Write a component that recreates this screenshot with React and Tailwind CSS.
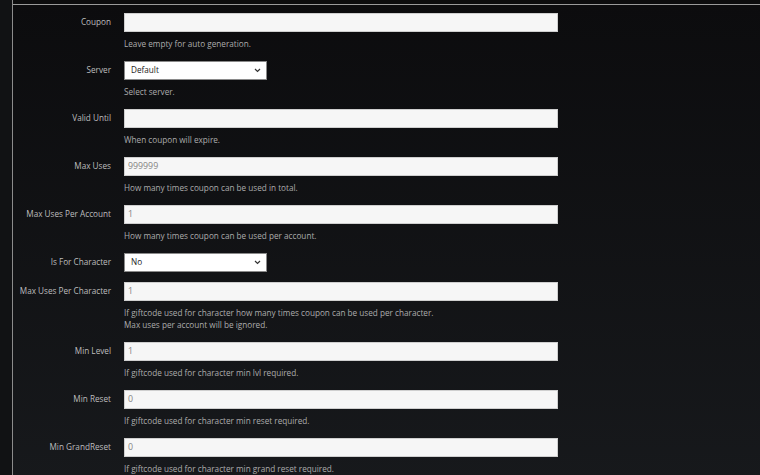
import React from 'react';

const fields = [
  { label: 'Coupon', type: 'text', value: '', help: ['Leave empty for auto generation.'] },
  { label: 'Server', type: 'select', value: 'Default', help: ['Select server.'] },
  { label: 'Valid Until', type: 'text', value: '', help: ['When coupon will expire.'] },
  { label: 'Max Uses', type: 'text', value: '999999', help: ['How many times coupon can be used in total.'] },
  { label: 'Max Uses Per Account', type: 'text', value: '1', help: ['How many times coupon can be used per account.'] },
  { label: 'Is For Character', type: 'select', value: 'No', help: [] },
  {
    label: 'Max Uses Per Character',
    type: 'text',
    value: '1',
    help: ['If giftcode used for character how many times coupon can be used per character.', 'Max uses per account will be ignored.'],
  },
  { label: 'Min Level', type: 'text', value: '1', help: ['If giftcode used for character min lvl required.'] },
  { label: 'Min Reset', type: 'text', value: '0', help: ['If giftcode used for character min reset required.'] },
  { label: 'Min GrandReset', type: 'text', value: '0', help: ['If giftcode used for character min grand reset required.'] },
];

const Chevron = () => (
  <svg width="7" height="5" viewBox="0 0 7 5" className="text-[#333]">
    <path d="M1 1l2.5 2.5L6 1" fill="none" stroke="currentColor" strokeWidth="1.2" />
  </svg>
);

const Field = ({ field }) => (
  <div className={`flex ${field.help.length ? 'mb-[11px]' : 'mb-[10px]'}`}>
    <div className="w-[98px] shrink-0 h-[19px] flex items-center justify-end text-[8.2px] text-[#bdbdbd]">
      {field.label}
    </div>
    <div className="ml-[13px] flex flex-col">
      {field.type === 'select' ? (
        <div className="w-[143px] h-[19px] bg-white border border-[#8a8a8a] flex items-center justify-between pl-[6px] pr-[5px] text-[8.2px] text-[#222]">
          <span>{field.value}</span>
          <Chevron />
        </div>
      ) : (
        <div className="w-[434px] h-[19px] bg-[#f6f6f6] border border-[#cfcfcf] flex items-center pl-[3px] text-[8.8px] text-[#858585]">
          {field.value}
        </div>
      )}
      {field.help.length > 0 && (
        <div className="mt-[6px] text-[8.2px] leading-[12px] text-[#acacac]">
          {field.help.map((line) => (
            <div key={line}>{line}</div>
          ))}
        </div>
      )}
    </div>
  </div>
);

export default function App() {
  return (
    <div
      className="w-[760px] h-[475px] overflow-hidden bg-[#0f0f10] flex"
      style={{ fontFamily: '"Open Sans", "Noto Sans", sans-serif' }}
    >
      <div className="w-[12px] shrink-0 bg-[#111214]" />
      <div className="flex-1 flex flex-col border-l border-[#8c8c8c]">
        <div className="h-[5px] shrink-0 bg-[#0c0c0d] border-b border-[#9a9a9a]" />
        <div className="flex-1 bg-gradient-to-b from-[#0c0c0e] to-[#17191c] pt-[8px]">
          {fields.map((f) => (
            <Field key={f.label} field={f} />
          ))}
        </div>
      </div>
    </div>
  );
}
